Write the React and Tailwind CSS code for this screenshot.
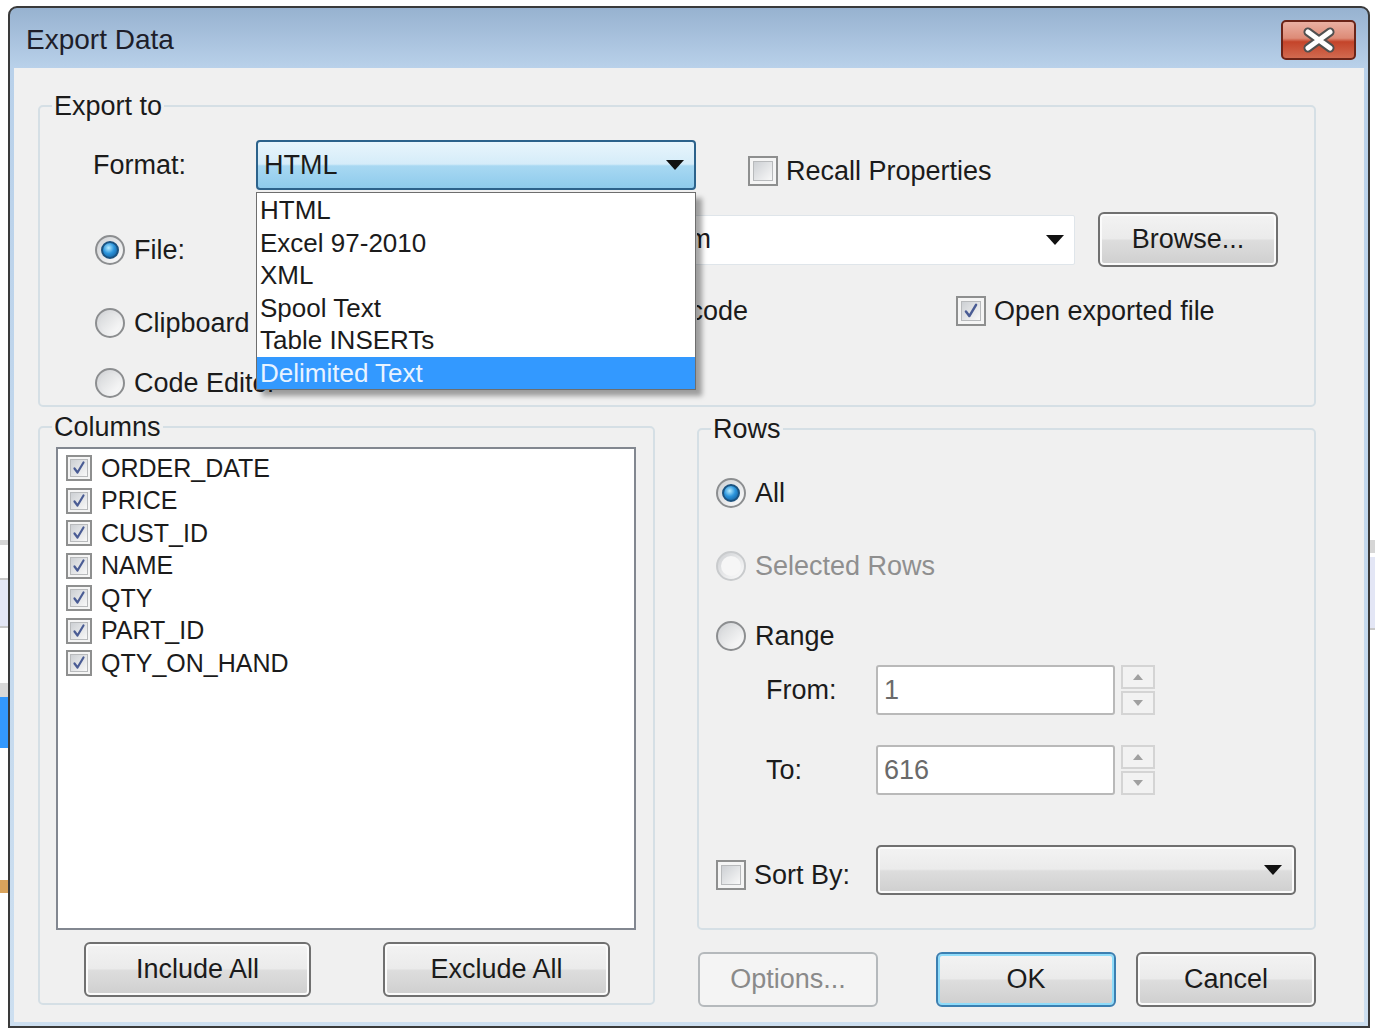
import React from 'react'

// 체크 표시
function CheckMark() {
    return (
        <svg viewBox="0 0 16 16" className="w-full h-full">
            <path d="M3.5 8.5 L6.5 12.5 L12.5 2.5" fill="none" stroke="#4a5c94" strokeWidth="2.2" strokeLinecap="round" strokeLinejoin="round" />
        </svg>
    )
}

// 콤보박스 화살표
function Arrow() {
    return (
        <svg viewBox="0 0 18 10" className="w-[18px] h-[10px] shrink-0">
            <path d="M0 0 L18 0 L9 10 Z" fill="#111" />
        </svg>
    )
}

function Radio({ checked, disabled, children, className = '' }) {
    return (
        <div className={'flex items-center ' + className}>
            <span className={'w-[30px] h-[30px] rounded-full border-2 flex items-center justify-center bg-[linear-gradient(135deg,#cfd1d4,#fdfdfd)] ' + (disabled ? 'border-[#c9cbcd]' : 'border-[#8c8e90]')}>
                {checked ? (
                    <span className="w-[18px] h-[18px] rounded-full border-2 border-[#1c5380] bg-[radial-gradient(circle_at_40%_35%,#b8ecff,#2c95dc_45%,#0d4f8c)]" />
                ) : (
                    <span className={'w-[20px] h-[20px] rounded-full ' + (disabled ? 'bg-[#f6f6f6]' : 'bg-[linear-gradient(135deg,#d6d8da,#fbfbfb)]')} />
                )}
            </span>
            <span className={'ml-[9px] leading-[30px] ' + (disabled ? 'text-[#8f8f8f]' : '')}>{children}</span>
        </div>
    )
}

function Check({ checked, children, className = '' }) {
    return (
        <div className={'flex items-center ' + className}>
            <span className="w-[30px] h-[30px] border-2 border-[#8e8f8f] bg-[#f5f5f5] p-[3px] flex">
                <span className="flex-1 border border-[#b8babc] bg-[linear-gradient(135deg,#cdd0d4,#f8f8f8)] flex items-center justify-center">
                    {checked && <CheckMark />}
                </span>
            </span>
            {children && <span className="ml-[8px] leading-[30px]">{children}</span>}
        </div>
    )
}

function Btn({ children, className = '', primary, disabled }) {
    let look = 'border-[#707070] shadow-[inset_0_0_0_2px_#fbfbfb]'
    if (primary) look = 'border-[#3c7fb1] shadow-[inset_0_0_0_2px_#8fdcfa]'
    if (disabled) look = 'border-[#b5b9bc] text-[#8a8a8a]'
    return (
        <div className={'h-[55px] w-[180px] rounded-[6px] border-2 flex items-center justify-center ' +
            (disabled ? 'bg-[#f4f4f4] ' : 'bg-[linear-gradient(#f3f3f3_0%,#ebebeb_48%,#dddddd_52%,#cfcfcf_100%)] ') + look + ' ' + className}>
            {children}
        </div>
    )
}

function Spinner() {
    return (
        <div className="ml-[6px] flex flex-col gap-[2px]">
            <div className="w-[34px] h-[24px] border-2 border-[#d4d4d4] bg-[#f2f2f2] flex items-center justify-center">
                <span className="w-0 h-0 border-x-[5px] border-x-transparent border-b-[6px] border-b-[#a0a0a0]" />
            </div>
            <div className="w-[34px] h-[24px] border-2 border-[#d4d4d4] bg-[#f2f2f2] flex items-center justify-center">
                <span className="w-0 h-0 border-x-[5px] border-x-transparent border-t-[6px] border-t-[#a0a0a0]" />
            </div>
        </div>
    )
}

const columns = ['ORDER_DATE', 'PRICE', 'CUST_ID', 'NAME', 'QTY', 'PART_ID', 'QTY_ON_HAND']
const formats = ['HTML', 'Excel 97-2010', 'XML', 'Spool Text', 'Table INSERTs', 'Delimited Text']

export default function App() {
    return (
        <div className="w-[1375px] h-[1031px] bg-white overflow-hidden flex font-['Liberation_Sans',Arial,sans-serif] text-[27px] text-[#1b1b1b]">

            {/* 뒤쪽 창 조각 */}
            <div className="w-[8px] flex flex-col">
                <div className="h-[540px]" />
                <div className="h-[5px] bg-[#d6d6d6]" />
                <div className="h-[33px]" />
                <div className="h-[50px] bg-[#e3e6f5] border-y-2 border-[#c8c8c8]" />
                <div className="h-[55px]" />
                <div className="h-[14px] bg-[#dadada]" />
                <div className="h-[51px] bg-[#3399ff]" />
                <div className="h-[132px]" />
                <div className="h-[13px] bg-[#d9a35c]" />
            </div>

            {/* 대화상자 */}
            <div className="mt-[6px] w-[1362px] h-[1022px] border-2 border-[#3a3a3a] rounded-t-[9px] bg-[linear-gradient(#97b2d0,#b9d1ea_60px,#cddff0)] flex flex-col">

                {/* 제목 표시줄 */}
                <div className="h-[60px] flex justify-between items-start">
                    <span className="ml-[16px] mt-[15px] text-[28px] leading-[34px] text-[#1e1e2a]">Export Data</span>
                    <div className="mt-[12px] mr-[12px] w-[75px] h-[40px] rounded-[5px] border-2 border-[#6b2418] bg-[linear-gradient(#eab0a2_0%,#dd8b77_45%,#c4442a_55%,#d16a50_100%)] flex items-center justify-center">
                        <svg viewBox="0 0 40 26" className="w-[40px] h-[26px]">
                            <path d="M9 5 L31 21 M31 5 L9 21" stroke="#505050" strokeWidth="9" strokeLinecap="round" />
                            <path d="M9 5 L31 21 M31 5 L9 21" stroke="#ffffff" strokeWidth="5" strokeLinecap="round" />
                        </svg>
                    </div>
                </div>

                {/* 본문 */}
                <div className="mx-[4px] h-[954px] bg-[#f0f0f0] pl-[24px]">

                    {/* Export to */}
                    <fieldset className="mt-[23px] w-[1278px] h-[316px] border-2 border-[#d5dfe5] rounded-[5px]">
                        <legend className="ml-[12px] px-[2px] leading-[30px]">Export to</legend>
                        <div className="pl-[53px]">

                            {/* Format */}
                            <div className="mt-[19px] h-[50px] flex items-center">
                                <span className="w-[163px]">Format:</span>
                                <div className="relative">
                                    <div className="w-[440px] h-[50px] rounded-[4px] border-2 border-[#2c628b] bg-[linear-gradient(#e8f5fc_0%,#d5ecf9_48%,#a8d8f2_52%,#8ecbec_100%)] flex items-center justify-between pl-[6px] pr-[10px]">
                                        <span>HTML</span>
                                        <Arrow />
                                    </div>
                                    {/* 열린 목록 */}
                                    <div className="absolute left-0 top-full mt-[2px] w-[440px] bg-white border border-[#6e6e6e] pt-[1px] z-10 shadow-[6px_6px_5px_rgba(0,0,0,0.35)]">
                                        {formats.map((f, i) => (
                                            <div key={f} className={'h-[32.5px] leading-[32.5px] pl-[3px] text-[26px] ' + (i === 5 ? 'bg-[#3399ff] text-[#e8f3ff]' : '')}>
                                                {f}
                                            </div>
                                        ))}
                                    </div>
                                </div>
                                <Check className="ml-[52px] mt-[12px]">Recall Properties</Check>
                            </div>

                            {/* File */}
                            <div className="mt-[22px] h-[55px] flex items-center">
                                <Radio checked className="w-[163px] ml-[2px] -mr-[2px] mt-[20px]">File:</Radio>
                                <div className="w-[819px] h-[50px] border border-[#dfe5ea] rounded-[2px] bg-white flex items-center pr-[10px]">
                                    {/* 목록에 가려진 경로: 끝부분만 보임 */}
                                    <div className="ml-[440px] w-[14px] flex justify-end overflow-hidden">
                                        <span className="shrink-0 whitespace-nowrap">export.htm</span>
                                    </div>
                                    <div className="flex-1" />
                                    <Arrow />
                                </div>
                                <Btn className="ml-[23px]">Browse...</Btn>
                            </div>

                            {/* Clipboard */}
                            <div className="mt-[29px] h-[42px] flex items-start">
                                <Radio className="w-[163px] ml-[2px] -mr-[2px] mt-[12px]">Clipboard</Radio>
                                <div className="ml-[441px] w-[51px] flex justify-end overflow-hidden leading-[30px]">
                                    <span className="shrink-0 whitespace-nowrap">Unicode</span>
                                </div>
                                <Check checked className="ml-[208px]">Open exported file</Check>
                            </div>

                            {/* Code Editor */}
                            <Radio className="mt-[30px] ml-[2px]">Code Editor</Radio>
                        </div>
                    </fieldset>

                    <div className="mt-[5px] flex">

                        {/* Columns */}
                        <fieldset className="w-[617px] h-[593px] border-2 border-[#d5dfe5] rounded-[5px]">
                            <legend className="ml-[12px] px-[2px] leading-[30px]">Columns</legend>
                            <div className="ml-[16px] mt-[5px] w-[580px] h-[483px] border-2 border-[#828790] bg-white pt-[3px] pl-[8px]">
                                {columns.map((c) => (
                                    <div key={c} className="h-[32.5px] flex items-center">
                                        <span className="w-[26px] h-[26px] border-2 border-[#8e8f8f] bg-[#f5f5f5] p-[2px] flex">
                                            <span className="flex-1 border border-[#b8babc] bg-[linear-gradient(135deg,#cdd0d4,#f8f8f8)] flex items-center justify-center">
                                                <CheckMark />
                                            </span>
                                        </span>
                                        <span className="ml-[9px] text-[25px]">{c}</span>
                                    </div>
                                ))}
                            </div>
                            <div className="mt-[12px] flex">
                                <Btn className="ml-[44px] w-[227px]">Include All</Btn>
                                <Btn className="ml-[72px] w-[227px]">Exclude All</Btn>
                            </div>
                        </fieldset>

                        {/* Rows + 버튼 */}
                        <div className="ml-[42px] w-[619px] flex flex-col">
                            <fieldset className="mt-[2px] w-[619px] h-[516px] border-2 border-[#d5dfe5] rounded-[5px]">
                                <legend className="ml-[12px] px-[2px] leading-[30px]">Rows</legend>
                                <div className="pl-[17px] flex flex-col">
                                    <div className="mt-[29px] h-[40px] flex items-center"><Radio checked>All</Radio></div>
                                    <div className="mt-[33px] h-[40px] flex items-center"><Radio disabled>Selected Rows</Radio></div>
                                    <div className="mt-[30px] h-[40px] flex items-center"><Radio>Range</Radio></div>

                                    <div className="mt-[9px] h-[50px] flex items-center">
                                        <span className="ml-[50px] w-[110px]">From:</span>
                                        <div className="w-[239px] h-[50px] border-2 border-[#b9b9b9] rounded-[3px] bg-white flex items-center pl-[6px] text-[#6a6a6a]">1</div>
                                        <Spinner />
                                    </div>
                                    <div className="mt-[30px] h-[50px] flex items-center">
                                        <span className="ml-[50px] w-[110px]">To:</span>
                                        <div className="w-[239px] h-[50px] border-2 border-[#b9b9b9] rounded-[3px] bg-white flex items-center pl-[6px] text-[#6a6a6a]">616</div>
                                        <Spinner />
                                    </div>

                                    <div className="mt-[50px] h-[50px] flex items-center">
                                        <Check className="w-[160px] mt-[10px]">Sort By:</Check>
                                        <div className="w-[420px] h-[50px] rounded-[5px] border-2 border-[#707070] bg-[linear-gradient(#f3f3f3_0%,#ebebeb_48%,#dddddd_52%,#cfcfcf_100%)] shadow-[inset_0_0_0_2px_#fbfbfb] flex items-center justify-end pr-[12px]">
                                            <Arrow />
                                        </div>
                                    </div>
                                </div>
                            </fieldset>

                            <div className="mt-[22px] flex">
                                <Btn disabled className="ml-[1px]">Options...</Btn>
                                <Btn primary className="ml-[58px]">OK</Btn>
                                <Btn className="ml-[20px]">Cancel</Btn>
                            </div>
                        </div>
                    </div>
                </div>
            </div>

            {/* 오른쪽 창 조각 */}
            <div className="w-[5px] flex flex-col">
                <div className="h-[540px]" />
                <div className="h-[13px] bg-[#d6d6d6]" />
                <div className="h-[4px]" />
                <div className="h-[73px] bg-[#e3e6f5] border-b-2 border-[#c8c8c8]" />
            </div>
        </div>
    )
}
